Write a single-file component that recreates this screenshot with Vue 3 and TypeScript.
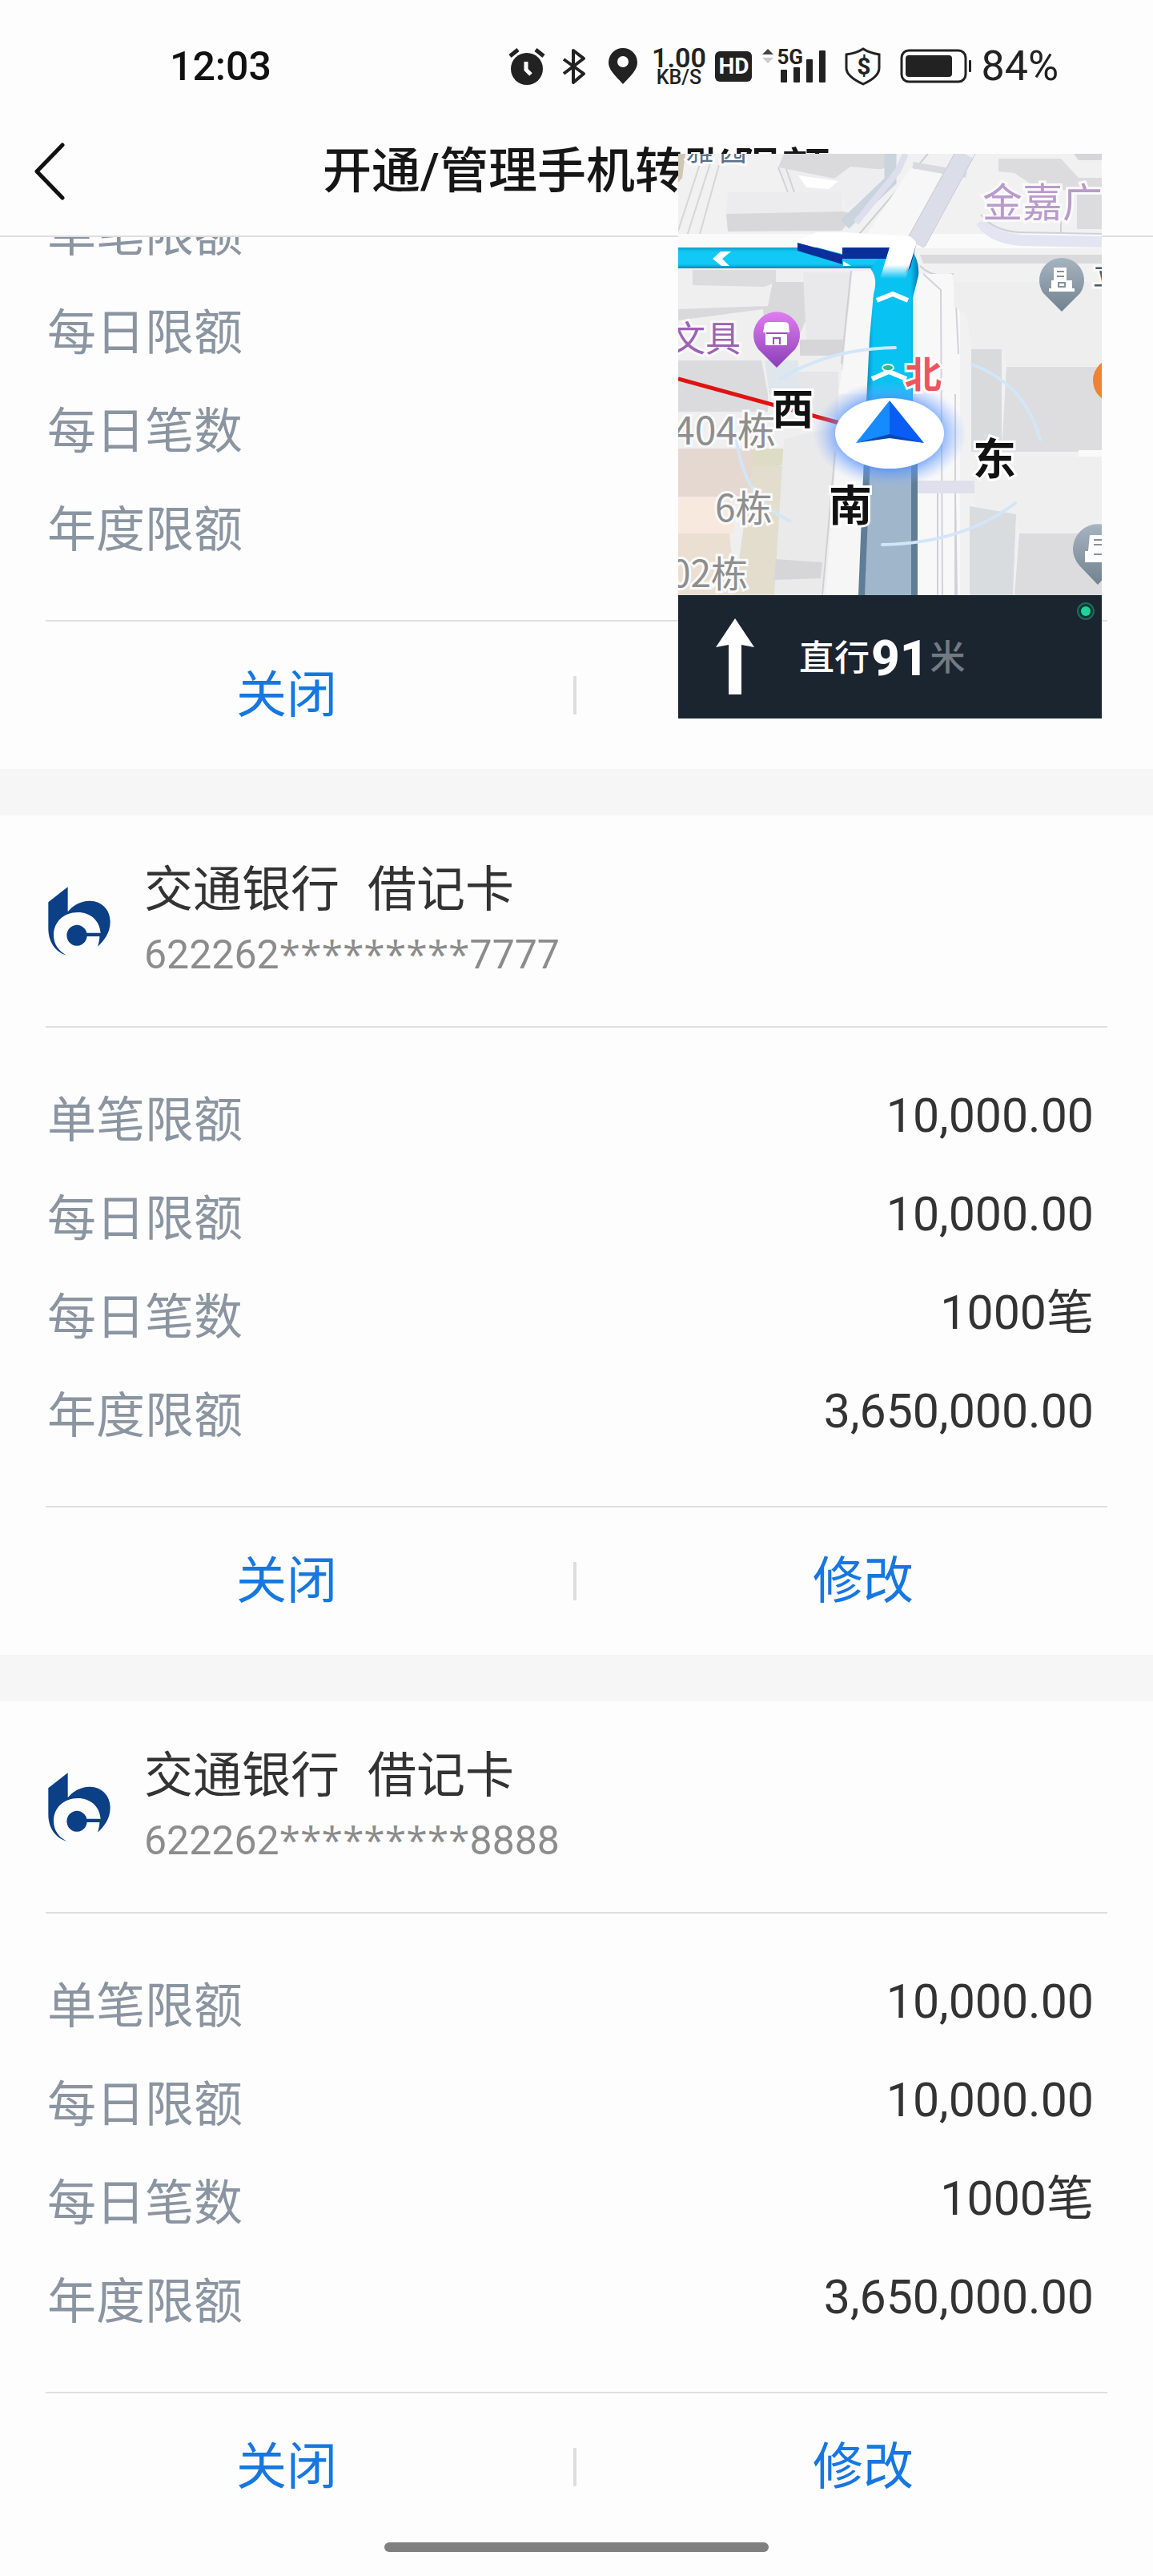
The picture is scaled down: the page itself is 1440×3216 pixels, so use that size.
<script setup lang="ts">
interface LimitRow {
  label: string
  value: string
}

interface BankCard {
  id: number
  bank: string
  kind: string
  prefix: string
  suffix: string
}

const cards: BankCard[] = [
  { id: 1, bank: '交通银行', kind: '借记卡', prefix: '622262', suffix: '6666' },
  { id: 2, bank: '交通银行', kind: '借记卡', prefix: '622262', suffix: '7777' },
  { id: 3, bank: '交通银行', kind: '借记卡', prefix: '622262', suffix: '8888' },
]

const limits: LimitRow[] = [
  { label: '单笔限额', value: '10,000.00' },
  { label: '每日限额', value: '10,000.00' },
  { label: '每日笔数', value: '1000笔' },
  { label: '年度限额', value: '3,650,000.00' },
]

const mask = '*********'
</script>

<template>
  <div class="screen">
    <header class="top">
      <div class="status">
        <time class="clock">12:03</time>
        <div class="indicators">
          <svg width="50" height="48" viewBox="0 0 50 48" aria-label="闹钟">
            <circle cx="23" cy="27" r="20" fill="#222" />
            <path d="M2 11 L12 3 M44 11 L34 3" stroke="#222" stroke-width="5" />
            <path d="M22 18 V28 L28 34" fill="none" stroke="#fff" stroke-width="5" />
          </svg>
          <svg width="50" height="48" viewBox="0 0 50 48" aria-label="蓝牙">
            <path d="M7 15 L32 33 L19 44 V4 L32 14 L7 33" fill="none" stroke="#222" stroke-width="4" stroke-linejoin="round" />
          </svg>
          <svg width="43" height="48" viewBox="0 0 43 48" aria-label="定位">
            <path fill-rule="evenodd" fill="#222" d="M19 1 A18 18 0 0 1 37 19 C37 29 27 37 19 46 C11 37 1 29 1 19 A18 18 0 0 1 19 1 Z M19 11 a7 7 0 1 0 0 14 a7 7 0 1 0 0 -14 Z" />
          </svg>
          <div class="speed"><b>1.00</b><span>KB/S</span></div>
          <div class="hd">HD</div>
          <div class="signal">
            <svg width="82" height="48" viewBox="0 0 82 48" aria-label="信号">
              <path d="M1 9 L8 2 L15 9 Z" fill="#444" />
              <path d="M1 13 L8 20 L15 13 Z" fill="#ccc" />
              <rect x="24" y="28" width="8" height="16" rx="1" fill="#222" />
              <rect x="40" y="25" width="8" height="19" rx="1" fill="#222" />
              <rect x="56" y="15" width="8" height="29" rx="1" fill="#222" />
              <rect x="72" y="4" width="8" height="40" rx="1" fill="#222" />
            </svg>
            <span class="net">5G</span>
          </div>
          <div class="shield">
            <svg width="67" height="48" viewBox="0 0 67 48" aria-label="支付保护">
              <path d="M33 2 C39 6 47 8 53 9 V26 C53 35 44 41 33 46 C22 41 12 35 12 26 V9 C19 8 27 6 33 2 Z" fill="none" stroke="#222" stroke-width="3" />
            </svg>
            <span class="dollar">$</span>
          </div>
          <svg width="89" height="48" viewBox="0 0 89 48" aria-label="电量">
            <rect x="2" y="4" width="80" height="39" rx="9" fill="none" stroke="#222" stroke-width="3" />
            <rect x="7" y="10" width="58" height="27" rx="4" fill="#222" />
            <rect x="86" y="16" width="3" height="15" rx="1" fill="#222" />
          </svg>
          <span class="percent">84%</span>
        </div>
      </div>
      <nav class="nav">
        <button class="back" type="button" aria-label="返回">
          <svg width="40" height="72" viewBox="0 0 40 72">
            <path d="M36 3 L4 36 L36 69" fill="none" stroke="#111" stroke-width="5" stroke-linecap="round" stroke-linejoin="round" />
          </svg>
        </button>
        <h1 class="title">开通/管理手机转账限额</h1>
      </nav>
    </header>

    <main class="viewport">
      <div class="list">
        <section v-for="card in cards" :key="card.id" class="card">
          <div class="card-head">
            <svg class="logo" width="78" height="86" viewBox="59 84 234 258" aria-label="交通银行">
              <path fill="#0b3f86" d="M60 142 L133 85 V178 C152 153 182 137 215 137 C262 137 292 172 292 215 C292 255 270 285 245 308 C250 292 252 280 252 270 H205 A38 39 0 1 1 204 257 H256 C252 212 220 180 170 180 C118 180 80 216 80 265 C80 300 98 325 129 341 C88 330 60 292 60 240 Z" />
            </svg>
            <div class="ident">
              <div class="name"><span>{{ card.bank }}</span><span>{{ card.kind }}</span></div>
              <div class="number">{{ card.prefix }}<span class="mask">{{ mask }}</span>{{ card.suffix }}</div>
            </div>
          </div>
          <dl class="limits">
            <div v-for="row in limits" :key="row.label" class="row">
              <dt>{{ row.label }}</dt>
              <dd>{{ row.value }}</dd>
            </div>
          </dl>
          <div class="actions">
            <button type="button">关闭</button>
            <i class="split"></i>
            <button type="button">修改</button>
          </div>
        </section>
      </div>
    </main>

    <footer class="home"><span class="bar"></span></footer>

    <aside class="pip">
      <svg class="map" viewBox="0 0 529 551">
        <defs>
          <linearGradient id="route" x1="0" x2="1" y1="0" y2="0">
            <stop offset="0" stop-color="#0a86b8" />
            <stop offset="0.15" stop-color="#08c2f2" />
            <stop offset="0.85" stop-color="#08c2f2" />
            <stop offset="1" stop-color="#0a74a8" />
          </linearGradient>
          <linearGradient id="routeH" x1="0" x2="0" y1="0" y2="1">
            <stop offset="0" stop-color="#0d9dcc" />
            <stop offset="0.2" stop-color="#12c8f4" />
            <stop offset="0.8" stop-color="#12c8f4" />
            <stop offset="1" stop-color="#0a86b8" />
          </linearGradient>
          <linearGradient id="fade" x1="0" x2="0" y1="0" y2="1">
            <stop offset="0.7" stop-color="#fff" />
            <stop offset="1" stop-color="#fff" stop-opacity="0" />
          </linearGradient>
          <linearGradient id="purple" x1="0" x2="0" y1="0" y2="1">
            <stop offset="0" stop-color="#e07cf0" />
            <stop offset="1" stop-color="#8a3fb8" />
          </linearGradient>
          <linearGradient id="grey" x1="0" x2="0" y1="0" y2="1">
            <stop offset="0" stop-color="#a6b4c0" />
            <stop offset="1" stop-color="#72828f" />
          </linearGradient>
          <radialGradient id="glow">
            <stop offset="0.6" stop-color="#3f86ff" stop-opacity="0.8" />
            <stop offset="1" stop-color="#8fb4ff" stop-opacity="0" />
          </radialGradient>
        </defs>

        <rect width="529" height="551" fill="#f1f1f2" />

        <!-- blocks north of the junction -->
        <path d="M0 0 H9 L5 30 L0 36 Z" fill="#cfc8b0" />
        <path d="M28 10 L0 96 M40 12 L6 118 M51 14 L26 104" stroke="#d6d6d8" stroke-width="2" fill="none" />
        <path d="M132 0 H258 V18 L195 31 L125 17 Z" fill="#dadadc" />
        <path d="M125 17 L195 31 L215 16 L258 20 V36 L210 70 L204 48 H140 Z" fill="#eeeef0" />
        <path d="M150 27 L200 34 L188 44 L160 42 Z" fill="#fff" />
        <path d="M125 17 L137 48 M135 19 L145 48" stroke="#d2d2d4" stroke-width="2" />
        <path d="M62 48 H204 L206 72 L60 75 Z" fill="#ececee" />
        <path d="M60 75 L206 72 L222 76 L204 96 L62 97 Z" fill="#d8d8da" />
        <path d="M265 0 V34 L208 88" fill="none" stroke="#cad4dc" stroke-width="15" />
        <path d="M284 0 L274 22 L222 86" fill="none" stroke="#dedfec" stroke-width="8" />
        <path d="M0 100 H529 V118 H0 Z" fill="#fafafa" />
        <path d="M312 0 L216 112" stroke="#cfcfd3" stroke-width="2" />
        <path d="M290 18 L334 26 L288 116 L232 106 Z" fill="#f7f7f8" />
        <path d="M293 14 L360 26" stroke="#d9d9e2" stroke-width="8" />
        <path d="M358 0 L296 112" stroke="#dbdde9" stroke-width="24" />
        <path d="M345 0 L283 112 M371 0 L308 116" stroke="#c8ccd6" stroke-width="1" />
        <path d="M400 6 H478 L500 30 H529 V94 H498 V46 L450 44 L420 24 L400 22 Z" fill="#dcdcde" />
        <path d="M494 0 H529 V8 H500 Z" fill="#d6d6d8" />
        <path d="M378 84 Q392 106 430 108 L529 110" fill="none" stroke="#e4e4f2" stroke-width="14" />
        <path d="M378 76 Q396 98 430 98 L529 100 M478 84 V98" fill="none" stroke="#d0d0dc" stroke-width="2" />
        <path d="M302 126 H529 V137 H306 Z" fill="#dadadc" />
        <path d="M302 140 Q318 156 344 150" fill="none" stroke="#d0d0d2" stroke-width="2" />

        <!-- blocks west of the road -->
        <path d="M0 145 H250 L228 551 H0 Z" fill="#efeff0" />
        <path d="M18 145 H122 V160 L108 166 L18 164 Z" fill="#dcdcde" />
        <path d="M118 160 H160 V206 L146 240 H110 L106 194 L0 208 V194 L112 190 Z" fill="#d9d9db" />
        <path d="M156 148 H214 V180 L206 250 L160 232 Z" fill="#e9e9eb" />
        <path d="M152 232 H206 L204 252 H152 Z" fill="#d6d6d8" />
        <path d="M216 146 L204 262 M214 210 L205 270" stroke="#cfcfd2" stroke-width="2" />
        <path d="M218 146 H248 L236 300 L200 300 L206 262 Z" fill="#f7f7f8" />
        <path d="M0 258 H104 L112 300 V322 H0 Z" fill="#dbdbdd" />
        <path d="M108 258 H150 V300 H114 Z" fill="#dfe6ec" />
        <path d="M150 272 H200 V330 L150 320 Z" fill="#e6e6e8" />
        <path d="M0 368 H94 V428 H0 Z" fill="#e4d8d0" />
        <path d="M94 368 H134 V388 L94 396 Z" fill="#dddcc4" />
        <path d="M92 390 H132 L126 551 H70 Z" fill="#e2ddcd" />
        <path d="M0 428 H70 V474 H0 Z" fill="#f7e9de" />
        <path d="M0 474 H64 L72 551 H0 Z" fill="#ebdfd2" />
        <path d="M132 356 L120 551 H178 L196 396 L200 340 Z" fill="#eaeaeb" />
        <path d="M122 506 L180 510 L178 530 L120 532 Z" fill="#d6d6d8" />
        <path d="M196 372 L180 551" stroke="#d0d0d2" stroke-width="2" />
        <path d="M198 372 H232 L226 551 H184 Z" fill="#f6f6f7" />

        <!-- blocks east of the road -->
        <path d="M298 150 H342 L352 200 V551 H298 Z" fill="#f8f8f9" />
        <path d="M306 150 L328 170 L330 551 M346 168 L350 250 M346 300 V551" fill="none" stroke="#d2d2da" stroke-width="2" />
        <path d="M344 160 H529 V265 H410 L404 244 H366 L360 200 L344 190 Z" fill="#eeeeef" />
        <path d="M366 244 H404 V372 H366 Z" fill="#d9dadc" />
        <path d="M410 266 H529 V372 H404 Z" fill="#dddddf" />
        <path d="M500 370 H529 V378 H500 Z" fill="#fafafa" />
        <path d="M372 378 H529 V474 H426 L420 450 L376 450 L366 420 Z" fill="#efeff0" />
        <path d="M364 440 L422 450 L418 551 H364 Z" fill="#d9dcde" />
        <path d="M426 474 H529 V551 H420 Z" fill="#dcdcde" />
        <path d="M298 408 H370 V424 H298 Z" fill="#e0e0ec" />
        <path d="M324 424 V551 M346 424 L348 551" stroke="#cfcfd8" stroke-width="2" />

        <!-- travelled and upcoming route -->
        <path d="M232 380 H299 V551 H225 Z" fill="#5f7d96" />
        <path d="M240 380 H291 V551 H233 Z" fill="#9fb6cb" />
        <rect x="0" y="117" width="262" height="26" fill="url(#routeH)" />
        <path d="M240 143 L262 117 H290 Q302 134 300 152 L293 180 L293 330 H234 L239 230 L244 175 Q250 156 240 143 Z" fill="url(#route)" />
        <path d="M205 117 H264 L260 131 H205 Z" fill="#0b2f9a" />
        <path d="M149 111 L205 126 V138 L149 121 Z" fill="#0b2f9a" />
        <path d="M298 110 L290 142 L284 150 L290 120 Z" fill="#0b2f9a" />
        <path d="M147 110 L172 98 H206 L290 103 L298 111 L284 156 H252 L264 117 H205 V125 Z" fill="url(#fade)" />
        <path d="M206 134 L216 140 H206 Z" fill="#fff" />
        <path d="M53 122 H66 L55 131 L64 140 H54 L43 131 Z" fill="#fff" />
        <path d="M248 183 L268 175 L287 183" fill="none" stroke="#fff" stroke-width="6" />
        <path d="M242 281 L263 272 L285 281" fill="none" stroke="#fff" stroke-width="6" />
        <ellipse cx="262" cy="267" rx="7" ry="4" fill="#35b58c" stroke="#d8fff2" stroke-width="2" />

        <!-- compass dial -->
        <g fill="none" stroke="#d3e6f7" stroke-width="4" stroke-linecap="round">
          <path d="M127 281 Q190 243 271 242" />
          <path d="M367 263 Q434 288 452 357" />
          <path d="M73 356 Q82 432 139 458" />
          <path d="M255 488 Q356 486 421 436" />
        </g>
        <path d="M0 281 L205 337" stroke="#e01212" stroke-width="5" />

        <!-- place pins -->
        <path d="M123 267 L100 244 A29 29 0 1 1 146 244 Z" fill="url(#purple)" />
        <path d="M108 212 Q110 210 114 210 H132 Q137 210 138 213 L139 223 H136 V239 H109 V223 H106 Z" fill="#fff" />
        <path d="M110 224 H136 M119 238 V230 H127 V238" fill="none" stroke="#9a50c0" stroke-width="2" />
        <path d="M479 197 L456 174 A28 28 0 1 1 502 174 Z" fill="url(#grey)" />
        <path d="M469 142 H485 V158 H492 V168 H495 V172 H463 V168 H466 V158 H469 Z" fill="#fff" />
        <path d="M473 147 H482 M473 153 H482 M475 166 V161 H483 V166 Z" fill="none" stroke="#84929e" stroke-width="2" />
        <path d="M524 538 L501 514 A31 31 0 1 1 547 514 Z" fill="url(#grey)" />
        <path d="M514 476 H529 V510 H508 V496 H512 Z" fill="#fff" />
        <path d="M519 482 H529 M519 488 H529 M519 500 H529" stroke="#84929e" stroke-width="2" />
        <circle cx="546" cy="283" r="28" fill="#f08232" />

        <g class="place">
          <text x="10" y="9" font-size="34" fill="#5b7086">雅 园</text>
          <text x="380" y="79" font-size="50" fill="#b99bca">金嘉广</text>
          <text x="518" y="164" font-size="34" fill="#4a5a66">立</text>
          <text x="-10" y="247" font-size="44" fill="#9d62b4">文具</text>
          <text x="-6" y="363" font-size="48" fill="#8e8e8e">404栋</text>
          <text x="46" y="459" font-size="46" fill="#8e8e8e">6栋</text>
          <text x="-10" y="541" font-size="46" fill="#8e8e8e">02栋</text>
        </g>

        <ellipse cx="264" cy="350" rx="96" ry="66" fill="url(#glow)" />
        <ellipse cx="264" cy="349" rx="68" ry="44" fill="#fff" />
        <path d="M264 308 L222 361 L264 352 Z" fill="#168bff" />
        <path d="M264 308 L307 361 L264 352 Z" fill="#0a5df2" />
        <path d="M222 361 L264 350 L307 361 L264 355 Z" fill="#0b47b0" />

        <g class="dial">
          <text x="283" y="292" font-size="46" fill="#ee555c">北</text>
          <text x="117" y="338" font-size="52" fill="#111">西</text>
          <text x="368" y="401" font-size="54" fill="#111">东</text>
          <text x="188" y="459" font-size="54" fill="#111">南</text>
        </g>
      </svg>
      <div class="guide">
        <svg width="48" height="96" viewBox="0 0 48 96" aria-label="直行">
          <path d="M24 0 L48 36 L32 33 V95 H16 V33 L0 36 Z" fill="#fff" />
        </svg>
        <p class="step">直行<b>91</b><span>米</span></p>
        <svg class="live" width="24" height="24" viewBox="0 0 24 24">
          <circle cx="12" cy="12" r="10" fill="#0c3a36" stroke="#1f6b5c" stroke-width="2" />
          <circle cx="12" cy="12" r="6" fill="#1fd49a" />
        </svg>
      </div>
    </aside>
  </div>
</template>

<style>
body {
  margin: 0;
  background: #fdfdfd;
}
</style>

<style scoped>
.screen {
  position: relative;
  min-height: 100vh;
  overflow: hidden;
  background: #fdfdfd;
  color: #333;
  font-family: Roboto, "Noto Sans CJK SC", sans-serif;
}

button {
  border: 0;
  padding: 0;
  background: none;
  font-family: inherit;
  cursor: pointer;
}

svg {
  display: block;
  flex: none;
}

.top {
  border-bottom: 2px solid #dedede;
}

.status {
  display: flex;
  align-items: center;
  justify-content: space-between;
  height: 96px;
  padding: 35px 118px 0 212px;
}

.clock {
  color: #111;
  font-size: 50px;
  font-weight: 500;
  line-height: 60px;
}

.indicators {
  display: flex;
  align-items: center;
  gap: 12px;
  color: #222;
}

.speed {
  display: flex;
  flex-direction: column;
  align-items: center;
  width: 67px;
  font-size: 25px;
  font-weight: 500;
  line-height: 22px;
}

.speed b {
  font-size: 34px;
  font-weight: 600;
  line-height: 28px;
}

.hd {
  box-sizing: border-box;
  width: 46px;
  height: 38px;
  border-radius: 6px;
  background: #222;
  color: #fff;
  font-size: 28px;
  font-weight: 700;
  line-height: 38px;
  text-align: center;
}

.signal,
.shield {
  position: relative;
}

.net {
  position: absolute;
  top: 0;
  left: 19px;
  background: #fdfdfd;
  font-size: 26px;
  font-weight: 700;
  line-height: 24px;
}

.dollar {
  position: absolute;
  inset: 0;
  font-size: 30px;
  font-weight: 700;
  line-height: 48px;
  text-align: center;
}

.percent {
  font-size: 52px;
  line-height: 60px;
}

.nav {
  box-sizing: border-box;
  display: grid;
  grid-template-columns: 120px 1fr 120px;
  align-items: center;
  height: 163px;
  padding-top: 2px;
}

.back {
  justify-self: start;
  margin-left: 42px;
}

.title {
  margin: 0;
  color: #161616;
  font-size: 61px;
  font-weight: 500;
  line-height: 88px;
  text-align: center;
  white-space: nowrap;
}

.viewport {
  overflow: hidden;
}

/* the list is scrolled so that the first card starts above the header edge */
.list {
  display: flex;
  flex-direction: column;
  gap: 58px;
  margin-top: -384px;
  background: #f6f6f6;
}

.card {
  background: #fdfdfd;
}

.card-head {
  box-sizing: border-box;
  display: flex;
  align-items: center;
  gap: 42px;
  height: 265px;
  margin: 0 57px;
  border-bottom: 2px solid #dfdfdf;
}

.logo {
  margin-left: 3px;
}

.ident {
  display: flex;
  flex-direction: column;
  padding-bottom: 4px;
}

.name {
  display: flex;
  gap: 35px;
  color: #333;
  font-size: 61px;
  line-height: 88px;
}

.number {
  color: #8c8c8c;
  font-size: 50px;
  line-height: 72px;
}

.mask {
  font-family: "Open Sans", "Noto Sans", sans-serif;
  font-size: 48px;
}

.limits {
  margin: 0 57px;
  padding: 55px 0 50px;
  border-bottom: 2px solid #dfdfdf;
}

.row {
  display: flex;
  justify-content: space-between;
  height: 123px;
  padding: 0 17px 0 2px;
  line-height: 123px;
}

dt {
  color: #8b95a1;
  font-size: 61px;
}

dd {
  margin: 0;
  height: 110px;
  color: #333;
  font-size: 59px;
  line-height: 110px;
}

.actions {
  display: flex;
  align-items: center;
  height: 184px;
  padding-right: 4px;
}

.actions button {
  flex: 1;
  color: #1677e0;
  font-size: 63px;
  line-height: 96px;
}

.split {
  width: 4px;
  height: 48px;
  background: #dedede;
}

.home {
  display: flex;
  justify-content: center;
  padding: 2px 0 28px;
}

.bar {
  width: 480px;
  height: 12px;
  border-radius: 6px;
  background: #808080;
}

.pip {
  position: absolute;
  top: 192px;
  right: 64px;
  width: 529px;
}

.map {
  width: 100%;
}

.place text {
  font-family: "Noto Sans CJK SC", sans-serif;
  paint-order: stroke;
  stroke: #fafafa;
  stroke-width: 6px;
}

.dial text {
  font-family: "Noto Sans CJK SC", sans-serif;
  font-weight: 700;
  paint-order: stroke;
  stroke: #fff;
  stroke-width: 6px;
}

.guide {
  position: relative;
  display: flex;
  align-items: center;
  gap: 56px;
  height: 154px;
  padding-left: 47px;
  background: #1a2530;
}

.step {
  display: flex;
  align-items: center;
  gap: 2px;
  margin: 0;
  padding-top: 4px;
  color: #fff;
  font-size: 44px;
  font-weight: 500;
  line-height: 80px;
}

.step b {
  font-size: 62px;
  font-weight: 800;
}

.step span {
  color: #727b83;
}

.live {
  position: absolute;
  top: 8px;
  right: 8px;
}
</style>
